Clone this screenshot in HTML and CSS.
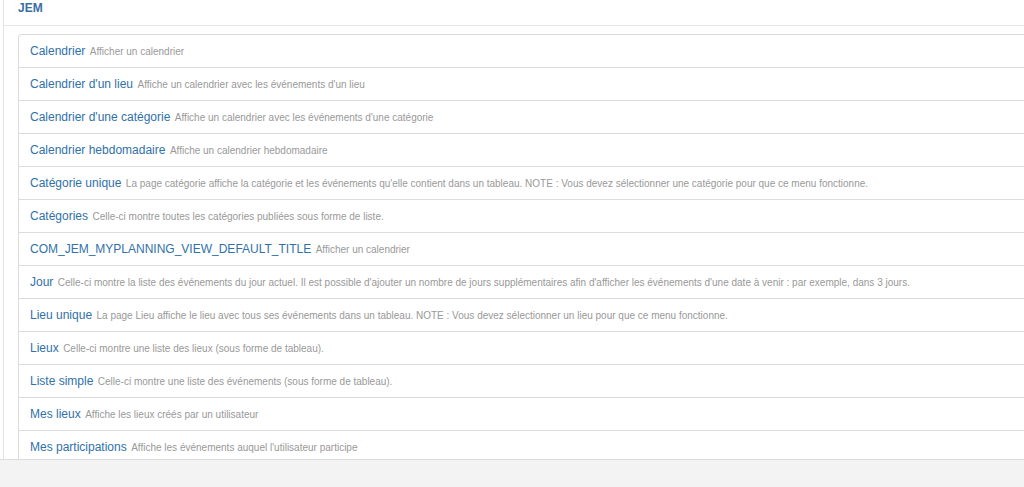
FILE: index.html
```html
<!DOCTYPE html>
<html lang="fr">
<head>
<meta charset="utf-8">
<title>JEM</title>
<link rel="stylesheet" href="styles.css">
</head>
<body>
<div class="page">
  <div class="panel">
    <div class="panel-head">JEM</div>
    <ul class="list">
      <li class="item"><a class="title">Calendrier</a> <small class="desc">Afficher un calendrier</small></li>
      <li class="item"><a class="title">Calendrier d'un lieu</a> <small class="desc">Affiche un calendrier avec les événements d'un lieu</small></li>
      <li class="item"><a class="title">Calendrier d'une catégorie</a> <small class="desc">Affiche un calendrier avec les événements d'une catégorie</small></li>
      <li class="item"><a class="title">Calendrier hebdomadaire</a> <small class="desc">Affiche un calendrier hebdomadaire</small></li>
      <li class="item"><a class="title">Catégorie unique</a> <small class="desc">La page catégorie affiche la catégorie et les événements qu'elle contient dans un tableau. NOTE : Vous devez sélectionner une catégorie pour que ce menu fonctionne.</small></li>
      <li class="item"><a class="title">Catégories</a> <small class="desc">Celle-ci montre toutes les catégories publiées sous forme de liste.</small></li>
      <li class="item"><a class="title">COM_JEM_MYPLANNING_VIEW_DEFAULT_TITLE</a> <small class="desc">Afficher un calendrier</small></li>
      <li class="item"><a class="title">Jour</a> <small class="desc">Celle-ci montre la liste des événements du jour actuel. Il est possible d'ajouter un nombre de jours supplémentaires afin d'afficher les événements d'une date à venir : par exemple, dans 3 jours.</small></li>
      <li class="item"><a class="title">Lieu unique</a> <small class="desc">La page Lieu affiche le lieu avec tous ses événements dans un tableau. NOTE : Vous devez sélectionner un lieu pour que ce menu fonctionne.</small></li>
      <li class="item"><a class="title">Lieux</a> <small class="desc">Celle-ci montre une liste des lieux (sous forme de tableau).</small></li>
      <li class="item"><a class="title">Liste simple</a> <small class="desc">Celle-ci montre une liste des événements (sous forme de tableau).</small></li>
      <li class="item"><a class="title">Mes lieux</a> <small class="desc">Affiche les lieux créés par un utilisateur</small></li>
      <li class="item"><a class="title">Mes participations</a> <small class="desc">Affiche les événements auquel l'utilisateur participe</small></li>
    </ul>
  </div>
</div>
</body>
</html>
```
FILE: styles.css
```css
html, body {
  margin: 0;
  padding: 0;
  background: #f3f3f3;
  font-family: "Liberation Sans", Arial, sans-serif;
}
.page {
  background: #fff;
  height: 459px;
  border-bottom: 1px solid #dcdcdc;
  padding-left: 3px;
  overflow: hidden;
}
.panel {
  border-left: 1px solid #e3e3e3;
  height: 100%;
  width: 1040px;
}
.panel-head {
  height: 26px;
  box-sizing: border-box;
  border-bottom: 1px solid #e6e6e6;
  padding-left: 14px;
  font-size: 12px;
  font-weight: bold;
  color: #3a6ea5;
  line-height: 17px;
}
.list {
  list-style: none;
  margin: 8px 0 0 14px;
  padding: 0;
  border: 1px solid #dcdcdc;
  border-right: 0;
  border-radius: 4px 0 0 0;
}
.item {
  height: 33px;
  box-sizing: border-box;
  padding: 0 11px;
  border-bottom: 1px solid #dcdcdc;
  line-height: 29px;
  white-space: nowrap;
}
.title {
  font-size: 12px;
  color: #3071a9;
}
.desc {
  font-size: 10px;
  color: #999;
}
```
